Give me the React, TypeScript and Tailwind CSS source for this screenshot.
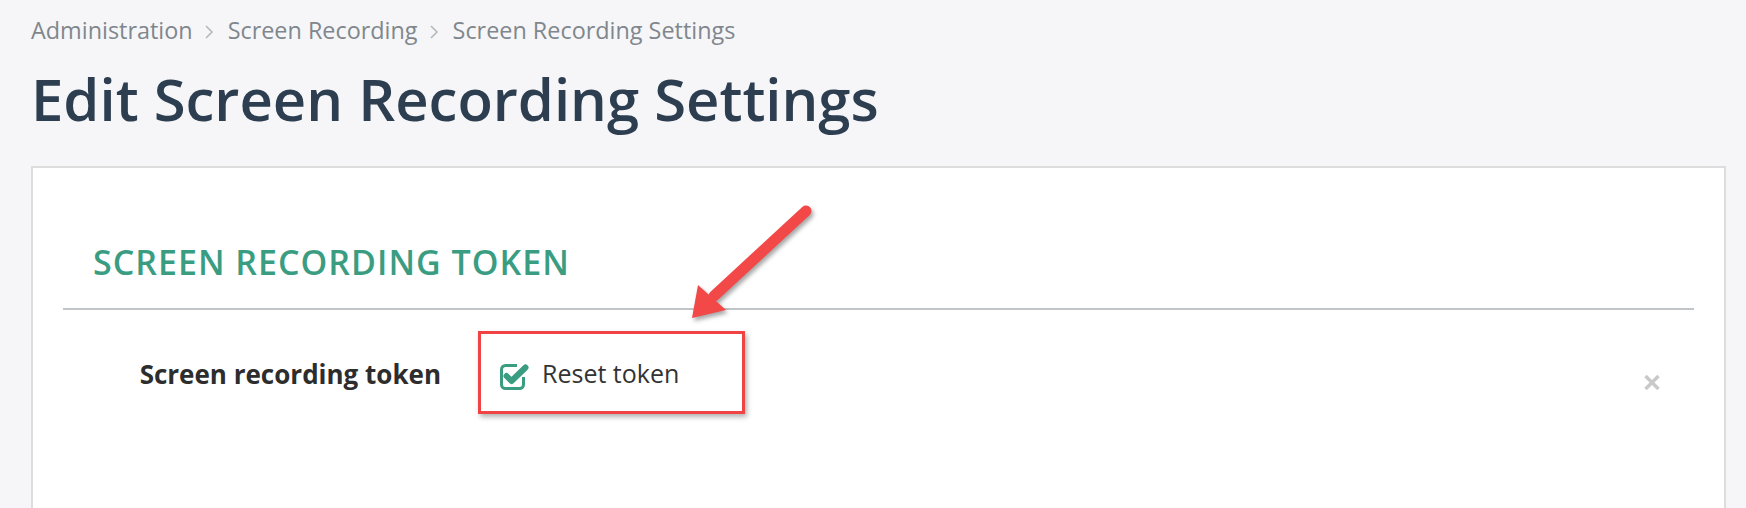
import { Fragment } from "react";

const crumbs = ["Administration", "Screen Recording", "Screen Recording Settings"];

function Chevron() {
  return (
    <svg width="10" height="16" viewBox="0 0 10 16" className="ml-[11px] mr-[14px] mt-[3px]">
      <path d="M2 2 L8 8 L2 14" fill="none" stroke="#b3b9be" strokeWidth="1.6" />
    </svg>
  );
}

function CheckIcon() {
  return (
    <svg width="30" height="26" viewBox="0 0 30 26" className="mt-[7px] shrink-0">
      {/* box with a gap in the top-right corner for the tick */}
      <path
        d="M17 1.5 H5.5 A4 4 0 0 0 1.5 5.5 V20.5 A4 4 0 0 0 5.5 24.5 H19.5 A4 4 0 0 0 23.5 20.5 V13"
        fill="none"
        stroke="#3a9d82"
        strokeWidth="3"
      />
      <path
        d="M6.5 12 L11.5 17 L25.5 3.5"
        fill="none"
        stroke="#3a9d82"
        strokeWidth="6"
        strokeLinecap="round"
        strokeLinejoin="round"
      />
    </svg>
  );
}

export default function App() {
  return (
    <div className="relative h-screen overflow-hidden bg-[#f6f6f8] pl-[31px] pr-[20px] font-['Open_Sans',sans-serif]">
      {/* Breadcrumb */}
      <nav className="flex items-center pt-[14px] text-[23.4px] leading-[32px] text-[#7f878d]">
        {crumbs.map((c, i) => (
          <Fragment key={c}>
            {i > 0 && <Chevron />}
            <span>{c}</span>
          </Fragment>
        ))}
      </nav>

      <h1 className="mt-[18px] text-[58px] leading-[70px] font-semibold text-[#2c3e50]">
        Edit Screen Recording Settings
      </h1>

      {/* Card */}
      <div className="mt-[32px] h-[420px] border-2 border-[#dddddd] bg-white px-[30px] pt-[74px]">
        <h2 className="border-b-2 border-[#c1c5c8] pb-[26px] pl-[30px] text-[34px] leading-[40px] font-semibold tracking-[1px] text-[#3a9d82] uppercase">
          Screen Recording Token
        </h2>

        <div className="mt-[21px] flex items-start">
          <div className="mt-[25px] w-[378px] shrink-0 text-right text-[26px] leading-[36px] font-bold text-[#2d2d2d]">
            Screen recording token
          </div>

          <div className="ml-[37px] flex items-start border-[3px] border-[#f04444] pt-[23px] pr-[63px] pb-[21px] pl-[19px] shadow-[2px_3px_5px_rgba(0,0,0,0.3)]">
            <CheckIcon />
            <span className="ml-[12px] text-[25px] leading-[32px] text-[#333333]">Reset token</span>
          </div>

          <button className="mt-[43px] mr-[33px] ml-auto cursor-pointer" aria-label="Remove">
            <svg width="18" height="17" viewBox="0 0 18 17">
              <path d="M2.5 2 L15.5 15 M15.5 2 L2.5 15" stroke="#c9c9c9" strokeWidth="3.5" />
            </svg>
          </button>
        </div>
      </div>

      {/* Annotation arrow */}
      <svg
        width="140"
        height="130"
        viewBox="0 0 140 130"
        className="pointer-events-none absolute top-[200px] left-[680px] drop-shadow-[2px_3px_2px_rgba(0,0,0,0.35)]"
      >
        <line x1="126" y1="11" x2="34" y2="96" stroke="#f24848" strokeWidth="11" strokeLinecap="round" />
        <polygon points="12,118 18,85 46,110" fill="#f24848" />
      </svg>
    </div>
  );
}
